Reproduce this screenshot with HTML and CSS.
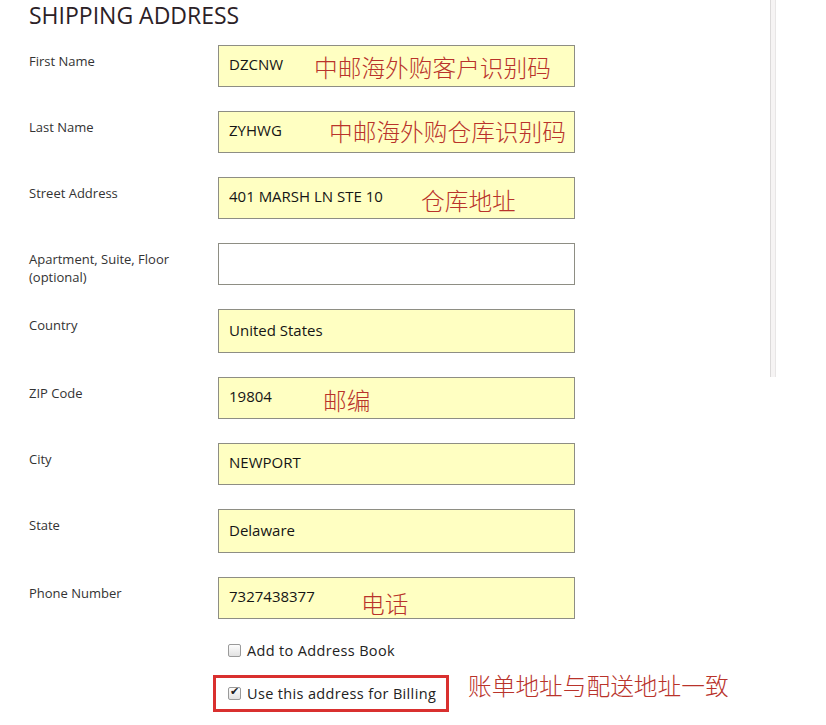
FILE: index.html
```html
<!DOCTYPE html>
<html lang="en">
<head>
  <meta charset="UTF-8" />
  <title>Shipping Address</title>
  <meta name="viewport" content="width=device-width, initial-scale=1.0">
  <link rel="stylesheet" href="styles.css">
</head>
<body>

  <div class="page">
    <div class="shipping">
      <h2 class="title">SHIPPING ADDRESS</h2>

      <div class="field">
        <label>First Name</label>
        <div class="control">
          <input type="text" class="filled" value="DZCNW" />
          <span class="note note-first">中邮海外购客户识别码</span>
        </div>
      </div>

      <div class="field">
        <label>Last Name</label>
        <div class="control">
          <input type="text" class="filled" value="ZYHWG" />
          <span class="note note-last">中邮海外购仓库识别码</span>
        </div>
      </div>

      <div class="field">
        <label>Street Address</label>
        <div class="control">
          <input type="text" class="filled" value="401 MARSH LN STE 10" />
          <span class="note note-street">仓库地址</span>
        </div>
      </div>

      <div class="field">
        <label>Apartment, Suite, Floor<br>(optional)</label>
        <div class="control">
          <input type="text" value="" />
        </div>
      </div>

      <div class="field">
        <label>Country</label>
        <div class="control">
          <div class="select filled">United States</div>
        </div>
      </div>

      <div class="field">
        <label>ZIP Code</label>
        <div class="control">
          <input type="text" class="filled" value="19804" />
          <span class="note note-zip">邮编</span>
        </div>
      </div>

      <div class="field">
        <label>City</label>
        <div class="control">
          <input type="text" class="filled" value="NEWPORT" />
        </div>
      </div>

      <div class="field">
        <label>State</label>
        <div class="control">
          <div class="select filled">Delaware</div>
        </div>
      </div>

      <div class="field">
        <label>Phone Number</label>
        <div class="control">
          <input type="text" class="filled" value="7327438377" />
          <span class="note note-phone">电话</span>
        </div>
      </div>

      <div class="options">
        <label class="option">
          <input type="checkbox" class="check" />
          <span>Add to Address Book</span>
        </label>
        <div class="option-row">
          <label class="option boxed">
            <input type="checkbox" class="check" checked />
            <span>Use this address for Billing</span>
          </label>
          <span class="note note-billing">账单地址与配送地址一致</span>
        </div>
      </div>
    </div>

    <div class="divider"></div>
  </div>

</body>
</html>
```

FILE: styles.css
```css
body {
  margin: 0;
  padding: 0;
  background: #fff;
  color: #333;
  font-family: 'Open Sans', 'Noto Sans CJK SC', sans-serif;
}

.page {
  display: flex;
  align-items: flex-start;
}

.shipping {
  width: 770px;
  padding-left: 29px;
  box-sizing: border-box;
}

.divider {
  width: 4px;
  height: 377px;
  background: #f6f4f4;
  border-left: 1px solid #dcdada;
  border-right: 1px solid #e8e6e6;
}

.title {
  margin: 0 0 18px;
  padding-top: 3px;
  line-height: 24px;
  font-size: 23px;
  font-weight: 400;
  letter-spacing: 0;
  color: #2b2126;
}

.field {
  display: grid;
  grid-template-columns: 189px 357px;
  margin-bottom: 24px;
}

.field label {
  padding-top: 7px;
  margin-bottom: -1px;
  font-size: 13px;
  line-height: 18px;
  color: #333;
}

.control {
  position: relative;
}

.control input,
.select {
  display: block;
  width: 357px;
  height: 42px;
  box-sizing: border-box;
  padding: 0 10px 4px;
  border: 1px solid #8e8e84;
  background: #fff;
  font-family: 'Open Sans', sans-serif;
  font-size: 15px;
  color: #151515;
  outline: none;
}

.select {
  height: 44px;
  line-height: 40px;
  padding-bottom: 0;
}

.filled {
  background: #ffffc2 !important;
}

.note {
  position: absolute;
  font-family: 'Noto Sans CJK SC', sans-serif;
  font-weight: 300;
  font-size: 23.7px;
  line-height: 1;
  color: #b9332b;
  white-space: nowrap;
}

.note-first { left: 96px; top: 11px; }
.note-last { left: 111px; top: 9px; }
.note-street { left: 203px; top: 12px; }
.note-zip { left: 105px; top: 12px; }
.note-phone { left: 143px; top: 15px; }

.options {
  margin-left: 189px;
  margin-top: -8px;
}

.option {
  display: flex;
  align-items: center;
  gap: 6px;
  padding-left: 10px;
  height: 30px;
  font-size: 14.5px;
  letter-spacing: 0.35px;
  color: #222;
  white-space: nowrap;
}

.option-row {
  position: relative;
  margin-top: 10px;
}

.option.boxed {
  width: 236px;
  height: 37px;
  box-sizing: border-box;
  margin-left: -5px;
  padding-left: 12px;
  border: 3px solid #d9302f;
}

.note-billing {
  left: 250px;
  top: -1px;
}

.check {
  appearance: none;
  -webkit-appearance: none;
  margin: 0;
  width: 13px;
  height: 13px;
  border: 1px solid #9a9a9a;
  border-radius: 2px;
  background: linear-gradient(#fdfdfd, #e2e2e2);
  position: relative;
  flex-shrink: 0;
}

.check:checked::after {
  content: "✔";
  position: absolute;
  left: 1px;
  top: -3px;
  font-size: 11px;
  color: #222;
}
```
